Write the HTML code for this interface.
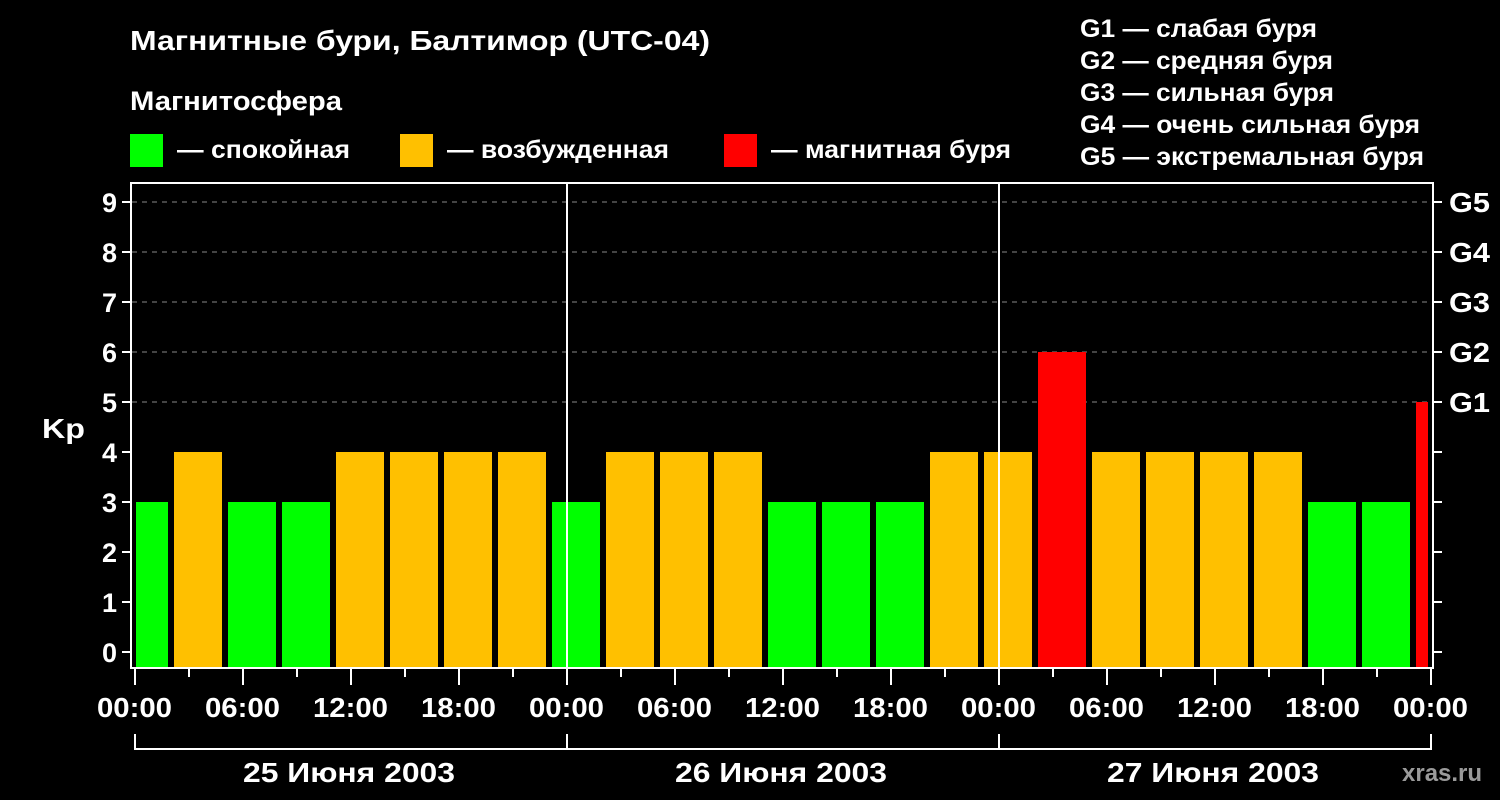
<!DOCTYPE html>
<html><head><meta charset="utf-8"><style>
html,body{margin:0;padding:0;background:#000;width:1500px;height:800px;overflow:hidden}
svg text{font-family:"Liberation Sans",Arial,sans-serif;font-weight:bold;fill:#fff}
</style></head><body>
<svg width="1500" height="800" xmlns="http://www.w3.org/2000/svg">
<rect width="1500" height="800" fill="#000"/>
<text x="130" y="50" font-size="28" textLength="580" lengthAdjust="spacingAndGlyphs">Магнитные бури, Балтимор (UTC-04)</text>
<text x="130" y="110" font-size="27" textLength="212" lengthAdjust="spacingAndGlyphs">Магнитосфера</text>
<rect x="130" y="134" width="33" height="33" fill="#00ff00"/>
<text x="177" y="158" font-size="25" textLength="173" lengthAdjust="spacingAndGlyphs">— спокойная</text>
<rect x="400" y="134" width="33" height="33" fill="#ffc000"/>
<text x="447" y="158" font-size="25" textLength="222" lengthAdjust="spacingAndGlyphs">— возбужденная</text>
<rect x="724" y="134" width="33" height="33" fill="#ff0000"/>
<text x="771" y="158" font-size="25" textLength="240" lengthAdjust="spacingAndGlyphs">— магнитная буря</text>
<g font-size="25">
<text x="1080" y="37" textLength="237" lengthAdjust="spacingAndGlyphs">G1 — слабая буря</text>
<text x="1080" y="69" textLength="253" lengthAdjust="spacingAndGlyphs">G2 — средняя буря</text>
<text x="1080" y="101" textLength="254" lengthAdjust="spacingAndGlyphs">G3 — сильная буря</text>
<text x="1080" y="133" textLength="340" lengthAdjust="spacingAndGlyphs">G4 — очень сильная буря</text>
<text x="1080" y="165" textLength="344" lengthAdjust="spacingAndGlyphs">G5 — экстремальная буря</text>
</g>
<g stroke="#888" stroke-width="1" stroke-dasharray="5,5">
<line x1="132" x2="1432" y1="202" y2="202"/><line x1="132" x2="1432" y1="252" y2="252"/>
<line x1="132" x2="1432" y1="302" y2="302"/><line x1="132" x2="1432" y1="352" y2="352"/>
<line x1="132" x2="1432" y1="402" y2="402"/>
</g>
<g>
<rect x="136" y="502" width="32" height="165" fill="#00ff00"/>
<rect x="174" y="452" width="48" height="215" fill="#ffc000"/>
<rect x="228" y="502" width="48" height="165" fill="#00ff00"/>
<rect x="282" y="502" width="48" height="165" fill="#00ff00"/>
<rect x="336" y="452" width="48" height="215" fill="#ffc000"/>
<rect x="390" y="452" width="48" height="215" fill="#ffc000"/>
<rect x="444" y="452" width="48" height="215" fill="#ffc000"/>
<rect x="498" y="452" width="48" height="215" fill="#ffc000"/>
<rect x="552" y="502" width="48" height="165" fill="#00ff00"/>
<rect x="606" y="452" width="48" height="215" fill="#ffc000"/>
<rect x="660" y="452" width="48" height="215" fill="#ffc000"/>
<rect x="714" y="452" width="48" height="215" fill="#ffc000"/>
<rect x="768" y="502" width="48" height="165" fill="#00ff00"/>
<rect x="822" y="502" width="48" height="165" fill="#00ff00"/>
<rect x="876" y="502" width="48" height="165" fill="#00ff00"/>
<rect x="930" y="452" width="48" height="215" fill="#ffc000"/>
<rect x="984" y="452" width="48" height="215" fill="#ffc000"/>
<rect x="1038" y="352" width="48" height="315" fill="#ff0000"/>
<rect x="1092" y="452" width="48" height="215" fill="#ffc000"/>
<rect x="1146" y="452" width="48" height="215" fill="#ffc000"/>
<rect x="1200" y="452" width="48" height="215" fill="#ffc000"/>
<rect x="1254" y="452" width="48" height="215" fill="#ffc000"/>
<rect x="1308" y="502" width="48" height="165" fill="#00ff00"/>
<rect x="1362" y="502" width="48" height="165" fill="#00ff00"/>
<rect x="1416" y="402" width="12" height="265" fill="#ff0000"/>
</g>
<g stroke="#fff" stroke-width="2" fill="none">
<rect x="131" y="183" width="1302" height="485"/>
<line x1="567" y1="183" x2="567" y2="668"/><line x1="999" y1="183" x2="999" y2="668"/>
</g>
<g stroke="#fff" stroke-width="2">
<line x1="122" x2="131" y1="202" y2="202"/><line x1="122" x2="131" y1="252" y2="252"/><line x1="122" x2="131" y1="302" y2="302"/><line x1="122" x2="131" y1="352" y2="352"/><line x1="122" x2="131" y1="402" y2="402"/><line x1="122" x2="131" y1="452" y2="452"/><line x1="122" x2="131" y1="502" y2="502"/><line x1="122" x2="131" y1="552" y2="552"/><line x1="122" x2="131" y1="602" y2="602"/><line x1="122" x2="131" y1="652" y2="652"/>
<line x1="1433" x2="1442" y1="202" y2="202"/><line x1="1433" x2="1442" y1="252" y2="252"/><line x1="1433" x2="1442" y1="302" y2="302"/><line x1="1433" x2="1442" y1="352" y2="352"/><line x1="1433" x2="1442" y1="402" y2="402"/><line x1="1433" x2="1442" y1="452" y2="452"/><line x1="1433" x2="1442" y1="502" y2="502"/><line x1="1433" x2="1442" y1="552" y2="552"/><line x1="1433" x2="1442" y1="602" y2="602"/><line x1="1433" x2="1442" y1="652" y2="652"/>
</g>
<g stroke="#fff" stroke-width="2">
<line x1="135" x2="135" y1="668" y2="685"/><line x1="189" x2="189" y1="668" y2="677"/>
<line x1="243" x2="243" y1="668" y2="685"/><line x1="297" x2="297" y1="668" y2="677"/>
<line x1="351" x2="351" y1="668" y2="685"/><line x1="405" x2="405" y1="668" y2="677"/>
<line x1="459" x2="459" y1="668" y2="685"/><line x1="513" x2="513" y1="668" y2="677"/>
<line x1="567" x2="567" y1="668" y2="685"/><line x1="621" x2="621" y1="668" y2="677"/>
<line x1="675" x2="675" y1="668" y2="685"/><line x1="729" x2="729" y1="668" y2="677"/>
<line x1="783" x2="783" y1="668" y2="685"/><line x1="837" x2="837" y1="668" y2="677"/>
<line x1="891" x2="891" y1="668" y2="685"/><line x1="945" x2="945" y1="668" y2="677"/>
<line x1="999" x2="999" y1="668" y2="685"/><line x1="1053" x2="1053" y1="668" y2="677"/>
<line x1="1107" x2="1107" y1="668" y2="685"/><line x1="1161" x2="1161" y1="668" y2="677"/>
<line x1="1215" x2="1215" y1="668" y2="685"/><line x1="1269" x2="1269" y1="668" y2="677"/>
<line x1="1323" x2="1323" y1="668" y2="685"/><line x1="1377" x2="1377" y1="668" y2="677"/>
<line x1="1431" x2="1431" y1="668" y2="685"/>
<polyline fill="none" points="135,734 135,749 1431,749 1431,734"/>
<line x1="567" x2="567" y1="734" y2="749"/><line x1="999" x2="999" y1="734" y2="749"/>
</g>
<g font-size="27" text-anchor="end">
<text x="117" y="212">9</text><text x="117" y="262">8</text><text x="117" y="312">7</text><text x="117" y="362">6</text><text x="117" y="412">5</text><text x="117" y="462">4</text><text x="117" y="512">3</text><text x="117" y="562">2</text><text x="117" y="612">1</text><text x="117" y="662">0</text>
</g>
<text x="42" y="438" font-size="28" textLength="43" lengthAdjust="spacingAndGlyphs">Kp</text>
<g font-size="28">
<text x="1449" y="212" textLength="41" lengthAdjust="spacingAndGlyphs">G5</text><text x="1449" y="262" textLength="41" lengthAdjust="spacingAndGlyphs">G4</text><text x="1449" y="312" textLength="41" lengthAdjust="spacingAndGlyphs">G3</text><text x="1449" y="362" textLength="41" lengthAdjust="spacingAndGlyphs">G2</text><text x="1449" y="412" textLength="41" lengthAdjust="spacingAndGlyphs">G1</text>
</g>
<g font-size="28">
<text x="97" y="717" textLength="75" lengthAdjust="spacingAndGlyphs">00:00</text><text x="205" y="717" textLength="75" lengthAdjust="spacingAndGlyphs">06:00</text><text x="313" y="717" textLength="75" lengthAdjust="spacingAndGlyphs">12:00</text><text x="421" y="717" textLength="75" lengthAdjust="spacingAndGlyphs">18:00</text>
<text x="529" y="717" textLength="75" lengthAdjust="spacingAndGlyphs">00:00</text><text x="637" y="717" textLength="75" lengthAdjust="spacingAndGlyphs">06:00</text><text x="745" y="717" textLength="75" lengthAdjust="spacingAndGlyphs">12:00</text><text x="853" y="717" textLength="75" lengthAdjust="spacingAndGlyphs">18:00</text>
<text x="961" y="717" textLength="75" lengthAdjust="spacingAndGlyphs">00:00</text><text x="1069" y="717" textLength="75" lengthAdjust="spacingAndGlyphs">06:00</text><text x="1177" y="717" textLength="75" lengthAdjust="spacingAndGlyphs">12:00</text><text x="1285" y="717" textLength="75" lengthAdjust="spacingAndGlyphs">18:00</text>
<text x="1393" y="717" textLength="75" lengthAdjust="spacingAndGlyphs">00:00</text>
<text x="243" y="782" textLength="212" lengthAdjust="spacingAndGlyphs">25 Июня 2003</text><text x="675" y="782" textLength="212" lengthAdjust="spacingAndGlyphs">26 Июня 2003</text><text x="1107" y="782" textLength="212" lengthAdjust="spacingAndGlyphs">27 Июня 2003</text>
</g>
<text x="1402" y="781" font-size="24" style="fill:#9a9a9a">xras.ru</text>
</svg>
</body></html>
